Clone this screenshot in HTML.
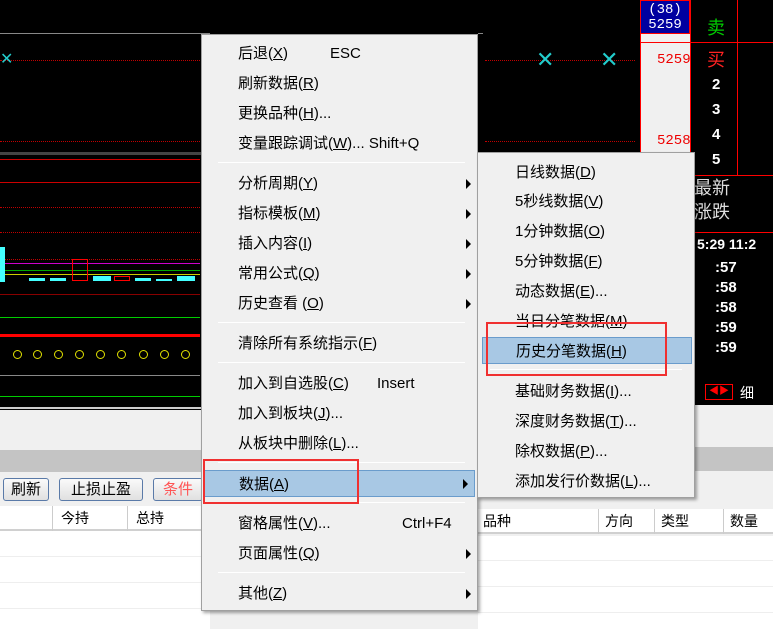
<!DOCTYPE html>
<html><head><meta charset="utf-8"><style>
*{margin:0;padding:0;box-sizing:border-box}
body{width:773px;height:629px;overflow:hidden;position:relative;background:#f0f0f0;font-family:"Liberation Sans","Noto Sans CJK SC",sans-serif;font-size:15px;color:#000}
.a{position:absolute}
.hl{position:absolute;height:1px}
.dot{position:absolute;height:0;border-top:1px dotted #c00000}
.menu{position:absolute;background:#f0f0f0;border:1px solid #a0a0a0;box-shadow:2px 2px 3px rgba(0,0,0,.35)}
.it{position:absolute;left:0;right:0;height:30px;line-height:30px;white-space:nowrap}
.sep{position:absolute;height:1px;background:#c8c8c8;border-bottom:1px solid #fff}
.arr{position:absolute;right:6px;top:10px;width:0;height:0;border-left:5px solid #000;border-top:5px solid transparent;border-bottom:5px solid transparent}
.btn{position:absolute;top:478px;height:23px;border:1px solid #5a7aa8;border-radius:3px;background:linear-gradient(#fafafa,#e0e0e0);font-size:15px;line-height:21px;text-align:center}
.th{position:absolute;top:506px;height:25px;line-height:25px;background:#fff;border-bottom:2px solid #d0d0d0;font-size:14px}
.w{color:#fff;font-weight:bold;font-size:15px}
.circ{position:absolute;top:350px;width:9px;height:9px;border:1.5px solid #e0e000;border-radius:50%}
</style></head><body>
<div class="a" style="left:0;top:0;width:210px;height:410px;background:#000"></div>
<div class="hl" style="left:0;top:33px;width:210px;background:#888"></div>
<div class="dot" style="left:0;top:60px;width:200px"></div>
<div class="dot" style="left:0;top:141px;width:200px"></div>
<div class="a" style="left:0;top:152px;width:210px;height:3px;background:#444"></div>
<div class="hl" style="left:0;top:159px;width:200px;background:#c00"></div>
<div class="hl" style="left:0;top:182px;width:200px;background:#c00"></div>
<div class="dot" style="left:0;top:207px;width:200px"></div>
<div class="dot" style="left:0;top:232px;width:200px"></div>
<div class="dot" style="left:0;top:259px;width:200px"></div>
<div class="a" style="left:0;top:247px;width:5px;height:35px;background:#4ff"></div>
<div class="hl" style="left:5px;top:263px;width:195px;background:#c0c"></div>
<div class="hl" style="left:5px;top:270px;width:195px;background:#0a0"></div>
<div class="hl" style="left:5px;top:274px;width:195px;background:#cc0"></div>
<div class="a" style="left:29px;top:278px;width:16px;height:3px;background:#4ff"></div>
<div class="a" style="left:50px;top:278px;width:16px;height:3px;background:#4ff"></div>
<div class="a" style="left:72px;top:259px;width:16px;height:22px;border:1px solid #f00"></div>
<div class="a" style="left:93px;top:276px;width:18px;height:5px;background:#4ff"></div>
<div class="a" style="left:114px;top:276px;width:16px;height:5px;border:1px solid #f00"></div>
<div class="a" style="left:135px;top:278px;width:16px;height:3px;background:#4ff"></div>
<div class="a" style="left:156px;top:279px;width:16px;height:2px;background:#4ff"></div>
<div class="a" style="left:177px;top:276px;width:18px;height:5px;background:#4ff"></div>
<div class="hl" style="left:0;top:294px;width:200px;background:#800"></div>
<div class="hl" style="left:0;top:317px;width:200px;background:#0c0"></div>
<div class="a" style="left:0;top:334px;width:200px;height:3px;background:#f00"></div>
<div class="circ" style="left:13px"></div><div class="circ" style="left:33px"></div><div class="circ" style="left:54px"></div><div class="circ" style="left:75px"></div><div class="circ" style="left:96px"></div><div class="circ" style="left:117px"></div><div class="circ" style="left:139px"></div><div class="circ" style="left:160px"></div><div class="circ" style="left:181px"></div>
<div class="hl" style="left:0;top:375px;width:200px;background:#888"></div>
<div class="hl" style="left:0;top:396px;width:200px;background:#0c0"></div>
<div class="a" style="left:0;top:407px;width:210px;height:2px;background:#ccc"></div>
<div class="a" style="left:0;top:450px;width:210px;height:22px;background:#c4c4c4"></div>
<div class="btn" style="left:3px;width:46px">刷新</div>
<div class="btn" style="left:59px;width:84px">止损止盈</div>
<div class="btn" style="left:153px;width:50px;color:#f55">条件</div>
<div class="th" style="left:0;width:210px"><span style="position:absolute;left:52px;border-left:1px solid #ccc;padding-left:8px">今持</span><span style="position:absolute;left:127px;border-left:1px solid #ccc;padding-left:8px">总持</span></div>
<div class="a" style="left:0;top:531px;width:210px;height:98px;background:#fff;background-image:linear-gradient(#eee 1px,transparent 1px);background-size:100% 26px;background-position:0 25px"></div>
<div class="a" style="left:478px;top:0;width:162px;height:152px;background:#000"></div>
<div class="a" style="left:210px;top:0;width:268px;height:34px;background:#000"></div>
<div class="hl" style="left:478px;top:33px;width:5px;background:#888"></div>
<div class="dot" style="left:485px;top:60px;width:150px"></div>
<div class="dot" style="left:485px;top:141px;width:150px"></div>
<div class="a" style="left:536px;top:47px;color:#2cc;font-size:22px;line-height:26px">✕</div>
<div class="a" style="left:600px;top:47px;color:#2cc;font-size:22px;line-height:26px">✕</div>
<div class="a" style="left:0;top:47px;color:#2cc;font-size:16px;line-height:26px">✕</div>
<div class="a" style="left:640px;top:0;width:50px;height:34px;background:#0000a0;border:1px solid #f00;color:#fff;font-family:'Liberation Mono',monospace;font-size:14px;line-height:15px;text-align:center;padding-top:2px">(38)<br>5259</div>
<div class="a" style="left:657px;top:52px;color:#e00;font-family:'Liberation Mono',monospace;font-size:14px">5259</div>
<div class="a" style="left:657px;top:133px;color:#e00;font-family:'Liberation Mono',monospace;font-size:14px">5258</div>
<div class="a" style="left:640px;top:0;width:1px;height:152px;background:#f00"></div>
<div class="a" style="left:690px;top:0;width:83px;height:405px;background:#000"></div>
<div class="a" style="left:690px;top:0;width:1px;height:175px;background:#f00"></div>
<div class="hl" style="left:640px;top:42px;width:133px;background:#f00"></div>
<div class="a" style="left:737px;top:0;width:1px;height:175px;background:#f00"></div>
<div class="hl" style="left:690px;top:175px;width:83px;background:#f00"></div>
<div class="hl" style="left:690px;top:232px;width:83px;background:#f00"></div>
<div class="a" style="left:707px;top:14px;color:#0c0;font-size:18px">卖</div>
<div class="a" style="left:707px;top:46px;color:#f22;font-size:18px">买</div>
<div class="a w" style="left:712px;top:76px">2</div>
<div class="a w" style="left:712px;top:101px">3</div>
<div class="a w" style="left:712px;top:126px">4</div>
<div class="a w" style="left:712px;top:151px">5</div>
<div class="a" style="left:694px;top:176px;color:#ddd;font-size:18px;line-height:24px">最新<br>涨跌</div>
<div class="a w" style="left:697px;top:236px;font-size:14px;white-space:nowrap;letter-spacing:0">5:29 11:2</div>
<div class="a w" style="left:715px;top:258px;line-height:20px">:57<br>:58<br>:58<br>:59<br>:59</div>
<div class="a" style="left:705px;top:384px;width:28px;height:16px;border:1px solid #f00;color:#f00;font-size:10px;line-height:14px;text-align:center">◀▶</div>
<div class="a" style="left:740px;top:383px;color:#fff;font-size:14px">细</div>
<div class="a" style="left:695px;top:447px;width:78px;height:24px;background:#c4c4c4"></div>
<div class="th" style="left:478px;top:509px;width:295px"><span style="position:absolute;left:5px">品种</span><span style="position:absolute;left:120px;border-left:1px solid #ccc;padding-left:6px">方向</span><span style="position:absolute;left:176px;border-left:1px solid #ccc;padding-left:6px">类型</span><span style="position:absolute;left:245px;border-left:1px solid #ccc;padding-left:6px">数量</span></div>
<div class="a" style="left:478px;top:536px;width:295px;height:93px;background:#fff;background-image:linear-gradient(#eee 1px,transparent 1px);background-size:100% 26px;background-position:0 24px"></div>
<div class="menu" style="left:201px;top:34px;width:277px;height:577px">
<div class="it" style="top:4px;padding-left:36px">后退(<u>X</u>)<span style="position:absolute;left:128px">ESC</span></div>
<div class="it" style="top:34px;padding-left:36px">刷新数据(<u>R</u>)</div>
<div class="it" style="top:64px;padding-left:36px">更换品种(<u>H</u>)...</div>
<div class="it" style="top:94px;padding-left:36px">变量跟踪调试(<u>W</u>)... Shift+Q</div>
<div class="sep" style="left:16px;right:12px;top:127px"></div>
<div class="it" style="top:134px;padding-left:36px">分析周期(<u>Y</u>)<i class="arr"></i></div>
<div class="it" style="top:164px;padding-left:36px">指标模板(<u>M</u>)<i class="arr"></i></div>
<div class="it" style="top:194px;padding-left:36px">插入内容(<u>I</u>)<i class="arr"></i></div>
<div class="it" style="top:224px;padding-left:36px">常用公式(<u>Q</u>)<i class="arr"></i></div>
<div class="it" style="top:254px;padding-left:36px">历史查看 (<u>O</u>)<i class="arr"></i></div>
<div class="sep" style="left:16px;right:12px;top:287px"></div>
<div class="it" style="top:294px;padding-left:36px">清除所有系统指示(<u>F</u>)</div>
<div class="sep" style="left:16px;right:12px;top:327px"></div>
<div class="it" style="top:334px;padding-left:36px">加入到自选股(<u>C</u>)<span style="position:absolute;left:175px">Insert</span></div>
<div class="it" style="top:364px;padding-left:36px">加入到板块(<u>J</u>)...</div>
<div class="it" style="top:394px;padding-left:36px">从板块中删除(<u>L</u>)...</div>
<div class="sep" style="left:16px;right:12px;top:427px"></div>
<div class="it" style="top:435px;left:2px;right:2px;height:27px;line-height:27px;padding-left:34px;background:#a8c8e4;border:1px solid #6a9ccc">数据(<u>A</u>)<i class="arr" style="top:8px"></i></div>
<div class="sep" style="left:16px;right:12px;top:467px"></div>
<div class="it" style="top:474px;padding-left:36px">窗格属性(<u>V</u>)...<span style="position:absolute;left:200px">Ctrl+F4</span></div>
<div class="it" style="top:504px;padding-left:36px">页面属性(<u>Q</u>)<i class="arr"></i></div>
<div class="sep" style="left:16px;right:12px;top:537px"></div>
<div class="it" style="top:544px;padding-left:36px">其他(<u>Z</u>)<i class="arr"></i></div>
</div>
<div class="menu" style="left:477px;top:152px;width:218px;height:346px">
<div class="it" style="top:5px;padding-left:37px">日线数据(<u>D</u>)</div>
<div class="it" style="top:34px;padding-left:37px">5秒线数据(<u>V</u>)</div>
<div class="it" style="top:64px;padding-left:37px">1分钟数据(<u>O</u>)</div>
<div class="it" style="top:94px;padding-left:37px">5分钟数据(<u>F</u>)</div>
<div class="it" style="top:124px;padding-left:37px">动态数据(<u>E</u>)...</div>
<div class="it" style="top:154px;padding-left:37px">当日分笔数据(<u>M</u>)</div>
<div class="it" style="top:184px;left:4px;right:2px;height:27px;line-height:27px;padding-left:33px;background:#a8c8e4;border:1px solid #6a9ccc">历史分笔数据(<u>H</u>)</div>
<div class="sep" style="left:12px;right:12px;top:216px"></div>
<div class="it" style="top:224px;padding-left:37px">基础财务数据(<u>I</u>)...</div>
<div class="it" style="top:254px;padding-left:37px">深度财务数据(<u>T</u>)...</div>
<div class="it" style="top:284px;padding-left:37px">除权数据(<u>P</u>)...</div>
<div class="it" style="top:314px;padding-left:37px">添加发行价数据(<u>L</u>)...</div>
</div>
<div class="a" style="left:203px;top:459px;width:156px;height:45px;border:2px solid #f03030"></div>
<div class="a" style="left:486px;top:322px;width:181px;height:54px;border:2px solid #f03030"></div>
</body></html>
